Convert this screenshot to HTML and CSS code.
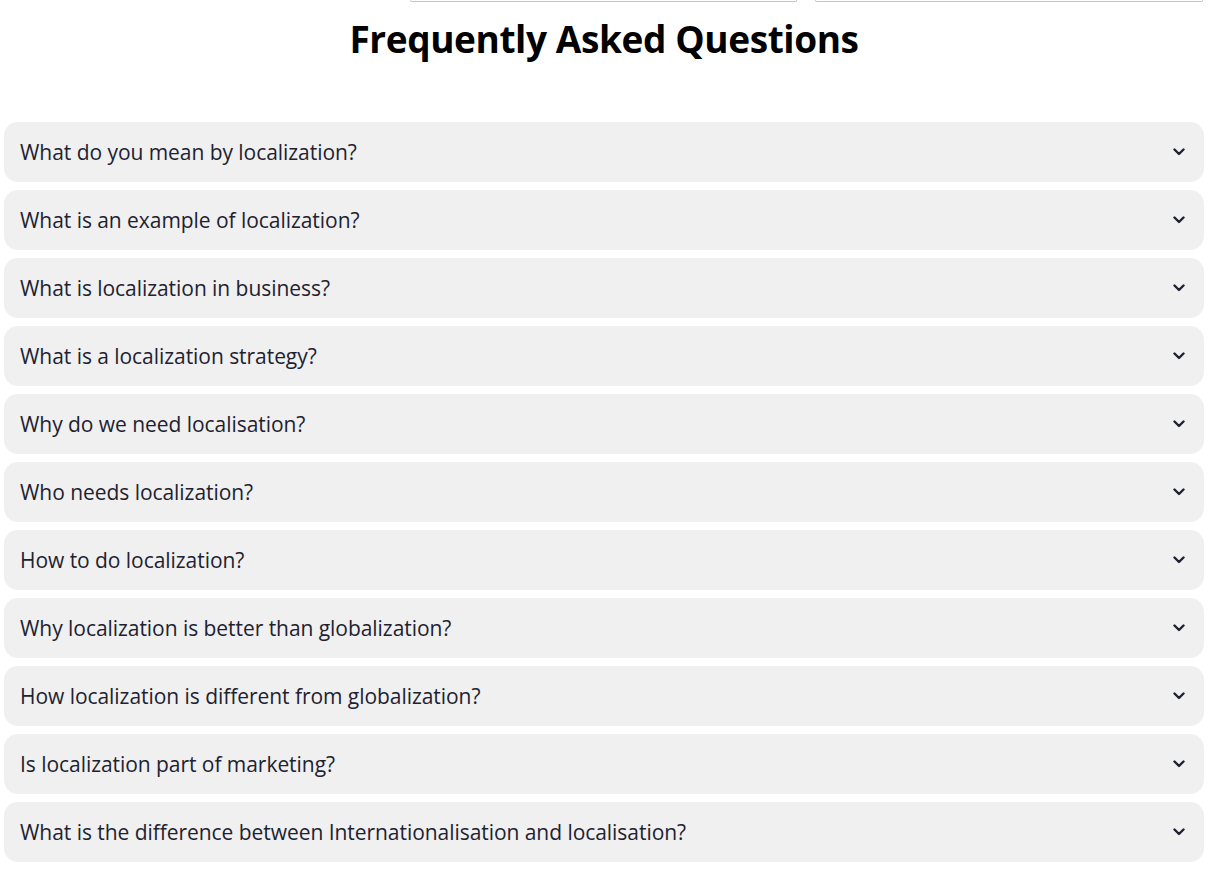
FILE: index.html
```html
<!DOCTYPE html>
<html lang="en">
<head>
<meta charset="utf-8">
<title>FAQ</title>
<link rel="stylesheet" href="styles.css">
</head>
<body>
<div class="page">
  <div class="top-fields">
    <div class="field field-a"></div>
    <div class="field field-b"></div>
  </div>
  <h1 class="title">Frequently Asked Questions</h1>
  <div class="faq">
    <div class="item"><span class="q">What do you mean by localization?</span><svg class="chev" viewBox="0 0 12 8" width="12" height="8"><path d="M1.5 1.5 L6 6 L10.5 1.5"/></svg></div>
    <div class="item"><span class="q">What is an example of localization?</span><svg class="chev" viewBox="0 0 12 8" width="12" height="8"><path d="M1.5 1.5 L6 6 L10.5 1.5"/></svg></div>
    <div class="item"><span class="q">What is localization in business?</span><svg class="chev" viewBox="0 0 12 8" width="12" height="8"><path d="M1.5 1.5 L6 6 L10.5 1.5"/></svg></div>
    <div class="item"><span class="q">What is a localization strategy?</span><svg class="chev" viewBox="0 0 12 8" width="12" height="8"><path d="M1.5 1.5 L6 6 L10.5 1.5"/></svg></div>
    <div class="item"><span class="q">Why do we need localisation?</span><svg class="chev" viewBox="0 0 12 8" width="12" height="8"><path d="M1.5 1.5 L6 6 L10.5 1.5"/></svg></div>
    <div class="item"><span class="q">Who needs localization?</span><svg class="chev" viewBox="0 0 12 8" width="12" height="8"><path d="M1.5 1.5 L6 6 L10.5 1.5"/></svg></div>
    <div class="item"><span class="q">How to do localization?</span><svg class="chev" viewBox="0 0 12 8" width="12" height="8"><path d="M1.5 1.5 L6 6 L10.5 1.5"/></svg></div>
    <div class="item"><span class="q">Why localization is better than globalization?</span><svg class="chev" viewBox="0 0 12 8" width="12" height="8"><path d="M1.5 1.5 L6 6 L10.5 1.5"/></svg></div>
    <div class="item"><span class="q">How localization is different from globalization?</span><svg class="chev" viewBox="0 0 12 8" width="12" height="8"><path d="M1.5 1.5 L6 6 L10.5 1.5"/></svg></div>
    <div class="item"><span class="q">Is localization part of marketing?</span><svg class="chev" viewBox="0 0 12 8" width="12" height="8"><path d="M1.5 1.5 L6 6 L10.5 1.5"/></svg></div>
    <div class="item"><span class="q">What is the difference between Internationalisation and localisation?</span><svg class="chev" viewBox="0 0 12 8" width="12" height="8"><path d="M1.5 1.5 L6 6 L10.5 1.5"/></svg></div>
  </div>
</div>
</body>
</html>
```

FILE: styles.css
```css
html, body {
  margin: 0;
  padding: 0;
  background: #ffffff;
}

body {
  font-family: "Open Sans", "Noto Sans", "Liberation Sans", sans-serif;
  color: #000;
}

.page {
  width: 1200px;
  margin-left: 4px;
}

.top-fields {
  display: flex;
  height: 2px;
  padding-left: 406px;
  gap: 18px;
}

.field {
  height: 1px;
  border: 1px solid #c6c6c6;
  border-top: none;
  border-radius: 0 0 5px 5px;
}

.field-a {
  width: 385px;
}

.field-b {
  width: 386px;
}

.title {
  margin: 0;
  padding-top: 14px;
  height: 120px;
  box-sizing: border-box;
  text-align: center;
  font-size: 37px;
  font-weight: 700;
  line-height: 46px;
  letter-spacing: -0.4px;
  color: #000;
}

.faq {
  display: flex;
  flex-direction: column;
  gap: 8px;
}

.item {
  height: 60px;
  background: #f0f0f0;
  border-radius: 14px;
  display: flex;
  align-items: center;
  justify-content: space-between;
  padding: 0 19px 0 16px;
}

.q {
  font-size: 21px;
  color: #1e2230;
  letter-spacing: -0.05px;
}

.chev {
  display: block;
  fill: none;
  stroke: #1e2230;
  stroke-width: 2.4;
  stroke-linecap: round;
  stroke-linejoin: round;
}
```
